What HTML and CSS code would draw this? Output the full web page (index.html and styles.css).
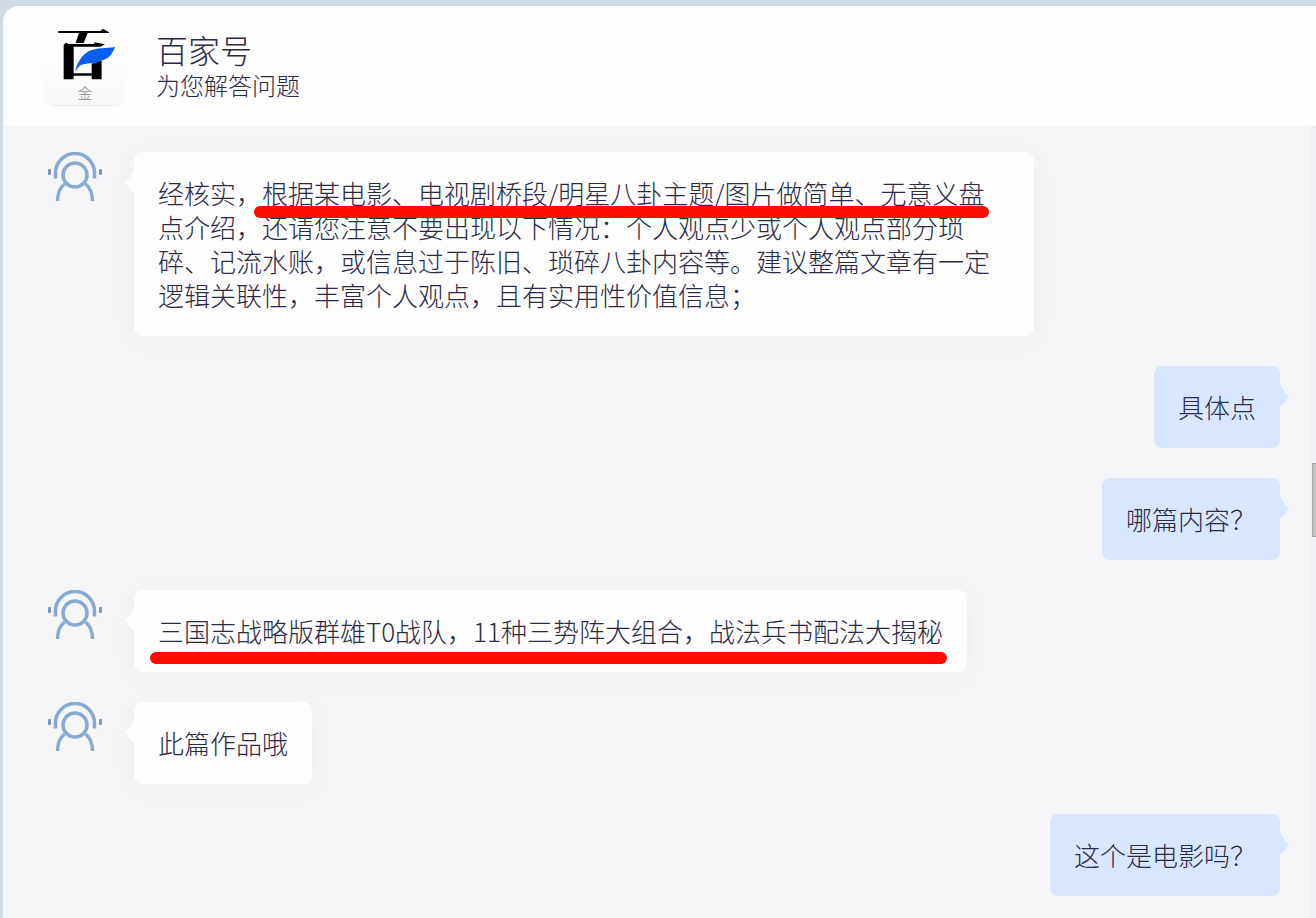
FILE: index.html
```
<!DOCTYPE html>
<html lang="zh-CN">
<head>
    <meta charset="UTF-8">
    <meta name="viewport" content="width=device-width, initial-scale=1.0">
    <title>百家号</title>
    <link rel="stylesheet" href="styles.css">
</head>
<body>
    <svg class="defs" aria-hidden="true">
        <symbol id="agent" viewBox="0 1 56 52">
            <g fill="none" stroke="#88a9d3" stroke-width="3.500">
                <path d="M8.500 27.500V22a19.500 19.500 0 0 1 39 0V27.500"/>
                <circle cx="28" cy="24" r="12"/>
                <path d="M10.500 50c0-8 2-13 7-17M45.500 50c0-8-2-13-7-17"/>
            </g>
            <rect x="1" y="18" width="3" height="6" rx="1" fill="#7b97bd"/>
            <rect x="52" y="18" width="3" height="6" rx="1" fill="#7b97bd"/>
        </symbol>
    </svg>

    <div class="window">
        <header class="header">
            <div class="logo">
                <svg class="logo-mark" viewBox="33 18 186 162" aria-hidden="true">
                    <path d="M46 36H172L180 29L198 40V42H46zM108 42H134L122 72H98z"/>
                    <path d="M62 77L70 71L76 75H154V70L186 76L172 83H92V163H146V134L176 124V181H146V170H92V181H62z"/>
                    <path fill="#0a5df5" d="M97 157C101 133 116 108 138 96C160 86 190 88 216 84C213 95 206 101 205 106C196 118 184 124 168 126L158 133C142 132 126 133 112 139C105 145 102 152 97 157z"/>
                </svg>
                <span class="logo-text">金</span>
            </div>
            <div>
                <h1 class="title">百家号</h1>
                <p class="subtitle">为您解答问题</p>
            </div>
        </header>

        <div class="body">
            <main class="messages">
                <div class="message">
                    <svg class="avatar" role="img" aria-label="客服"><use href="#agent"/></svg>
                    <p class="bubble">经核实，<span class="marked">根据某电影、电视剧桥段/明星八卦主题/图片做简单、无意义盘</span>点介绍，还请您注意不要出现以下情况：个人观点少或个人观点部分琐碎、记流水账，或信息过于陈旧、琐碎八卦内容等。建议整篇文章有一定逻辑关联性，丰富个人观点，且有实用性价值信息；</p>
                </div>

                <div class="message mine">
                    <p class="bubble">具体点</p>
                </div>

                <div class="message mine">
                    <p class="bubble">哪篇内容？</p>
                </div>

                <div class="message">
                    <svg class="avatar" role="img" aria-label="客服"><use href="#agent"/></svg>
                    <p class="bubble"><span class="marked marked-low">三国志战略版群雄T0战队，11种三势阵大组合，战法兵书配法大揭秘</span></p>
                </div>

                <div class="message">
                    <svg class="avatar" role="img" aria-label="客服"><use href="#agent"/></svg>
                    <p class="bubble">此篇作品哦</p>
                </div>

                <div class="message mine">
                    <p class="bubble">这个是电影吗？</p>
                </div>
            </main>
            <div class="track"><div class="thumb"></div></div>
        </div>
    </div>
</body>
</html>
```

FILE: styles.css
```
* {
    box-sizing: border-box;
}

body {
    margin: 0;
    background: #d1dae4;
    color: #2b2a45;
    font-family: "Noto Sans CJK SC", "Noto Sans", sans-serif;
    font-weight: 300;
}

h1, p {
    margin: 0;
    font-weight: 300;
}

.defs {
    position: absolute;
    width: 0;
    height: 0;
}

.window {
    display: flex;
    flex-direction: column;
    min-height: calc(100vh - 6px);
    margin: 6px 0 0 3px;
    border-radius: 16px 0 0 0;
    background: #f6f6f8;
    overflow: hidden;
}

/* header */
.header {
    display: flex;
    align-items: center;
    gap: 31px;
    height: 120px;
    padding: 0 42px 2px;
    background: #fdfdfe;
}

.logo {
    display: flex;
    flex-direction: column;
    align-items: center;
    gap: 4px;
    width: 80px;
    height: 80px;
    border-radius: 12px;
    background: linear-gradient(#fdfdfe 50%, #f8f8f9);
    box-shadow: 0 1px 1px #ececee;
}

.logo-mark {
    width: 62px;
    height: 54px;
    overflow: visible;
}

.logo-text {
    color: #8a8a8e;
    font-size: 15px;
    line-height: 20px;
}

.title {
    font-size: 32px;
    line-height: 40px;
}

.subtitle {
    font-size: 24px;
    line-height: 32px;
}

/* conversation */
.body {
    display: flex;
    flex: 1;
}

.messages {
    display: flex;
    flex: 1;
    flex-direction: column;
    gap: 30px;
    padding: 26px 30px 22px 44px;
}

.message {
    display: flex;
    align-items: flex-start;
    gap: 31px;
}

.mine {
    justify-content: flex-end;
}

.avatar {
    flex: none;
    width: 56px;
    height: 52px;
}

.bubble {
    position: relative;
    max-width: 900px;
    padding: 24px;
    border-radius: 8px;
    background: #fdfdfe;
    box-shadow: 0 4px 24px rgba(40, 50, 90, 0.04);
    font-size: 26px;
    line-height: 34px;
}

.bubble::before {
    content: "";
    position: absolute;
    top: 16px;
    left: -9px;
    width: 10px;
    height: 30px;
    background: inherit;
    clip-path: polygon(100% 0, 60% 25%, 0 50%, 60% 75%, 100% 85%);
}

.mine .bubble {
    background: #d8e7ff;
    box-shadow: none;
}

.mine .bubble::before {
    left: auto;
    right: -9px;
    clip-path: polygon(0 0, 40% 25%, 100% 50%, 40% 75%, 0 85%);
}

/* red pen line under the key words */
.marked {
    position: relative;
}

.marked::after {
    content: "";
    position: absolute;
    right: -4px;
    bottom: -7px;
    left: -8px;
    height: 12px;
    border-radius: 6px;
    background: #fd0d00;
}

.marked-low::after {
    bottom: -15px;
}

/* scrollbar */
.track {
    position: relative;
    flex: none;
    width: 6px;
    background: #f0f0f4;
}

.thumb {
    position: absolute;
    top: 42.5%;
    right: 0;
    width: 4px;
    height: 74px;
    border: 1px solid #a5a5a8;
    border-right: 0;
    background: #c3c3c6;
}
```
